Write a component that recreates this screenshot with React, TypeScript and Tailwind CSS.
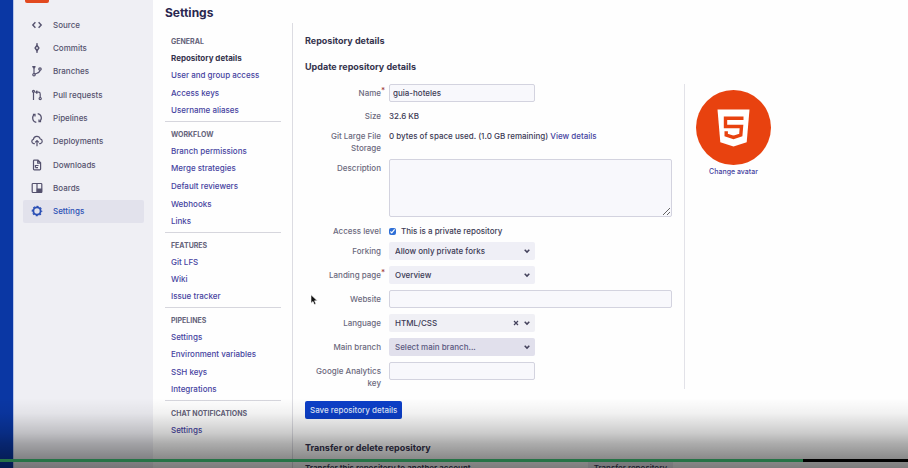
import type { ReactNode } from 'react';

const SECTIONS = [
  { title: 'General', height: 'h-[70px]', items: ['Repository details', 'User and group access', 'Access keys', 'Username aliases'] },
  { title: 'Workflow', height: 'h-[88px]', items: ['Branch permissions', 'Merge strategies', 'Default reviewers', 'Webhooks', 'Links'] },
  { title: 'Features', height: 'h-[52px]', items: ['Git LFS', 'Wiki', 'Issue tracker'] },
  { title: 'Pipelines', height: 'h-[70px]', items: ['Settings', 'Environment variables', 'SSH keys', 'Integrations'] },
  { title: 'Chat notifications', height: 'h-[17px]', items: ['Settings'] },
];

const NAV: { name: string; icon: ReactNode }[] = [
  { name: 'Source', icon: <path d="M4.400 3.200 1.800 6l2.600 2.800M7.600 3.200 10.200 6 7.600 8.800" strokeWidth="1.400" /> },
  {
    name: 'Commits',
    icon: (
      <>
        <path d="M6 1v2.500M6 8.500V11" />
        <path d="M6 3.300 7.900 6 6 8.700 4.100 6z" strokeWidth="1.400" />
      </>
    ),
  },
  {
    name: 'Branches',
    icon: (
      <>
        <path d="M3 3v6M1.300 1.700h3.200M9 5.200c0 2.600-2 2.400-5.400 3.900" />
        <circle cx="3" cy="2.200" r=".7" />
        <circle cx="3" cy="9.700" r="1.200" />
        <circle cx="9" cy="4" r="1.200" />
      </>
    ),
  },
  {
    name: 'Pull requests',
    icon: (
      <>
        <path d="M2.500 3v8M4.800 3.200h2.700q1.700 0 1.700 1.700v4M6.300 1.700 4.800 3.200l1.500 1.500" />
        <circle cx="2.500" cy="2.300" r="1" />
        <circle cx="9.200" cy="9.600" r="1.100" />
      </>
    ),
  },
  {
    name: 'Pipelines',
    icon: (
      <>
        <path d="M5.300 10.300A4.300 4.300 0 0 1 3.400 2.600M6.700 1.700A4.300 4.300 0 0 1 8.600 9.400" />
        <path d="M1.900 2.300H4V4.400M10.100 9.700H8V7.600" />
      </>
    ),
  },
  {
    name: 'Deployments',
    icon: <path d="M3.800 8.600H2.700A2.200 2.200 0 0 1 2.400 4.300 3.500 3.500 0 0 1 9.200 3.800 2.450 2.450 0 0 1 9.300 8.600H8.200M6 11.200V5.800M4.200 7.400 6 5.600l1.800 1.800" />,
  },
  {
    name: 'Downloads',
    icon: <path d="M2.500 2q0-.8.800-.8H7L9.600 3.800V10q0 .8-.8.800H3.300q-.8 0-.8-.8zM6.700 1.400V4.200H9.400M4.400 8.600V6.500H7.500M4.400 8.600H7" />,
  },
  {
    name: 'Boards',
    icon: (
      <>
        <rect x="1.200" y="1.500" width="9.600" height="9" rx=".8" />
        <path d="M6 1.500v9" />
        <path d="M6.300 7h4.200v3.200H6.300z" fill="currentColor" />
      </>
    ),
  },
  {
    name: 'Settings',
    icon: (
      <>
        <circle cx="6" cy="6" r="3.600" strokeWidth="1.800" />
        <circle cx="6" cy="6" r="4.700" strokeWidth="1.200" strokeDasharray="2 1.690" strokeDashoffset="1" />
      </>
    ),
  },
];

const BOX = 'block rounded-[2px] border border-[#d3d3df] bg-[#f8f8fc] px-[3px] text-[#3c3a55] outline-none';
const HEADING = 'text-[9px] leading-[14px] font-bold text-[#35334d]';

function Row({ label, htmlFor, required, children }: { label: string; htmlFor?: string; required?: boolean; children?: ReactNode }) {
  const Tag = htmlFor ? 'label' : 'span';
  return (
    <div className="flex items-start gap-2">
      <Tag htmlFor={htmlFor} className="w-[76px] shrink-0 pt-[3px] pl-2 text-right text-[#6b697d]">
        <span className="relative">
          {label}
          {required && <span className="absolute -top-1 left-full text-[#a03a3a]">*</span>}
        </span>
      </Tag>
      {children}
    </div>
  );
}

function Chevron() {
  return (
    <svg viewBox="0 0 8 8" className="pointer-events-none absolute top-[5px] right-1 size-2" fill="none" stroke="#44425c" strokeWidth="1.500">
      <path d="m1.700 2.800 2.300 2.300 2.300-2.300" />
    </svg>
  );
}

function Select({ id, value, tone, clearable }: { id: string; value: string; tone: string; clearable?: boolean }) {
  return (
    <div className="relative w-[146px]">
      <select id={id} className={'block h-[18px] w-full appearance-none rounded-[2px] pl-1.5 outline-none ' + tone}>
        <option>{value}</option>
      </select>
      {clearable && (
        <button type="button" aria-label="Clear language" className="absolute top-[5px] right-[15px] size-2 text-[#44425c]">
          <svg viewBox="0 0 8 8" className="size-2" fill="none" stroke="currentColor" strokeWidth="1.200">
            <path d="m2 2 4 4M6 2 2 6" />
          </svg>
        </button>
      )}
      <Chevron />
    </div>
  );
}

export default function App() {
  return (
    <div className="relative flex h-screen overflow-hidden bg-[#fefefe] font-['Inter','Liberation_Sans',sans-serif] text-[8px] leading-3 font-medium text-[#3c3a55]">
      <div className="w-3.5 shrink-0 border-r border-[#b9c6ea] bg-[#0a37a4]" />

      <aside className="w-[139px] shrink-0 bg-[#efeff4]">
        <div className="ml-[11px] h-[3px] w-6 rounded-b-[2px] bg-[#e2491f]" />
        <nav className="mx-[9px] mt-2.5 grid h-[210px] grid-rows-9">
          {NAV.map(({ name, icon }) => {
            const active = name === 'Settings';
            return (
              <a
                key={name}
                href="#"
                aria-current={active ? 'page' : undefined}
                className={'flex items-center gap-2.5 rounded-[2px] pl-2 ' + (active ? 'bg-[#e2e2ec] text-[#2b50b5]' : 'text-[#55526e]')}
              >
                <svg viewBox="0 0 12 12" className="size-3" fill="none" stroke="currentColor" strokeWidth="1.200">
                  {icon}
                </svg>
                {name}
              </a>
            );
          })}
        </nav>
      </aside>

      <div className="min-w-0 flex-1 pt-[5px] pl-3">
        <h1 className="text-[12px] leading-4 font-bold text-[#2a2850]">Settings</h1>
        <div className="mt-0.5 flex">
          <nav className="w-[116px] shrink-0 pt-1.5">
            {SECTIONS.map(({ title, height, items }, i) => (
              <section key={title} className={'px-1.5 pt-[5px] ' + (i < SECTIONS.length - 1 ? 'border-b border-[#d6d6dd] pb-0.5' : '')}>
                <h2 className="text-[7px] leading-[15px] font-bold text-[#65637a] uppercase">{title}</h2>
                <ul className={'grid auto-rows-fr ' + height}>
                  {items.map((item) => (
                    <li key={item} className="flex items-center whitespace-nowrap">
                      <a href="#" className={item === 'Repository details' ? 'font-bold text-[#35334d]' : 'text-[#4643a0]'}>
                        {item}
                      </a>
                    </li>
                  ))}
                </ul>
              </section>
            ))}
          </nav>

          <main className="ml-[11px] h-[460px] min-w-0 flex-1 border-l border-[#dcdce2] pl-3">
            <h2 className={'mt-[11px] ' + HEADING}>Repository details</h2>
            <h3 className={'mt-3 ' + HEADING}>Update repository details</h3>
            <form onSubmit={(e) => e.preventDefault()}>
              <div className="mt-2.5 flex gap-3">
                <div className="w-[367px]">
                  <div className="flex flex-col gap-[5px]">
                    <Row label="Name" htmlFor="name" required>
                      <input id="name" defaultValue="guia-hoteles" className={BOX + ' h-[18px] w-[146px]'} />
                    </Row>
                    <Row label="Size">
                      <span className="py-[3px]">32.6 KB</span>
                    </Row>
                    <div className="flex items-start gap-2">
                      <span className="w-[76px] shrink-0 pl-4 text-right text-[#6b697d]">Git Large File Storage</span>
                      <span className="whitespace-nowrap">
                        0 bytes of space used. (1.0 GB remaining) <a href="#" className="text-[#4643a0]">View details</a>
                      </span>
                    </div>
                    <Row label="Description" htmlFor="description">
                      <textarea id="description" className={BOX + ' h-[58px] w-[284px] resize'} />
                    </Row>
                    <Row label="Access level">
                      <label className="flex items-center gap-[5px] py-[3px]">
                        <input type="checkbox" defaultChecked className="size-[7px] accent-[#2f6fd6]" />
                        This is a private repository
                      </label>
                    </Row>
                  </div>
                  <div className="mt-0.5 flex flex-col gap-1.5">
                    <Row label="Forking" htmlFor="forking">
                      <Select id="forking" value="Allow only private forks" tone="bg-[#efeff6]" />
                    </Row>
                    <Row label="Landing page" htmlFor="landing" required>
                      <Select id="landing" value="Overview" tone="bg-[#efeff6]" />
                    </Row>
                    <Row label="Website" htmlFor="website">
                      <input id="website" className={BOX + ' h-[18px] w-[284px]'} />
                    </Row>
                    <Row label="Language" htmlFor="language">
                      <Select id="language" value="HTML/CSS" tone="bg-[#f0f0f5]" clearable />
                    </Row>
                    <Row label="Main branch" htmlFor="branch">
                      <Select id="branch" value="Select main branch..." tone="bg-[#e1e0ec] text-[#5b5880]" />
                    </Row>
                    <Row label="Google Analytics key" htmlFor="analytics">
                      <input id="analytics" className={BOX + ' h-[18px] w-[146px]'} />
                    </Row>
                  </div>
                </div>
                <div className="flex flex-col items-center border-l border-[#e2e2e8] pt-1.5 pl-[11px]">
                  <svg viewBox="0 0 75 75" className="size-[75px]" role="img" aria-label="HTML5">
                    <circle cx="37.500" cy="37.500" r="37.500" fill="#e8420f" />
                    <path d="M21.500 19.500h32l-2.800 32.800L37.500 56.500l-13.200-4.200z" fill="#fff" />
                    <path d="M47.500 28.300H29.500V36.500H45.500L44.800 45 37.500 47.400 30.200 45V41.200" fill="none" stroke="#e8420f" strokeWidth="3.400" />
                  </svg>
                  <a href="#" className="mt-px text-[7px] text-[#4643a0]">Change avatar</a>
                </div>
              </div>
              <button type="submit" className="mt-3 h-[18px] rounded-[2px] bg-[#0c3fc8] px-[5px] text-[#dfe6fb]">
                Save repository details
              </button>
            </form>
            <h3 className={'mt-[22px] ' + HEADING}>Transfer or delete repository</h3>
            <div className="mt-[5px] flex w-[368px] items-center justify-between">
              <span className="font-semibold">Transfer this repository to another account</span>
              <button type="button" className="h-4 rounded-[2px] bg-[#ececf2] px-1.5">Transfer repository</button>
            </div>
          </main>
        </div>
      </div>

      <svg viewBox="0 0 8 12" className="absolute top-[294px] left-[310px] h-3 w-2" fill="#111" stroke="#fff" strokeWidth=".6">
        <path d="M1 .8v8.400l2-1.800 1.300 3.200 1.600-.7-1.400-3.100H7.300z" />
      </svg>

      <div className="pointer-events-none absolute inset-x-0 bottom-0 h-[70px] bg-[linear-gradient(to_bottom,transparent,rgb(0_0_0/0.05)_22%,rgb(0_0_0/0.2)_50%,rgb(0_0_0/0.32)_65%,rgb(0_0_0/0.45)_86%,rgb(0_0_0/0.51))]" />
      <div className="absolute inset-x-0 bottom-1.5 h-[3px] bg-black">
        <div className="h-full w-[88.4%] bg-[#267346]" />
      </div>
    </div>
  );
}
